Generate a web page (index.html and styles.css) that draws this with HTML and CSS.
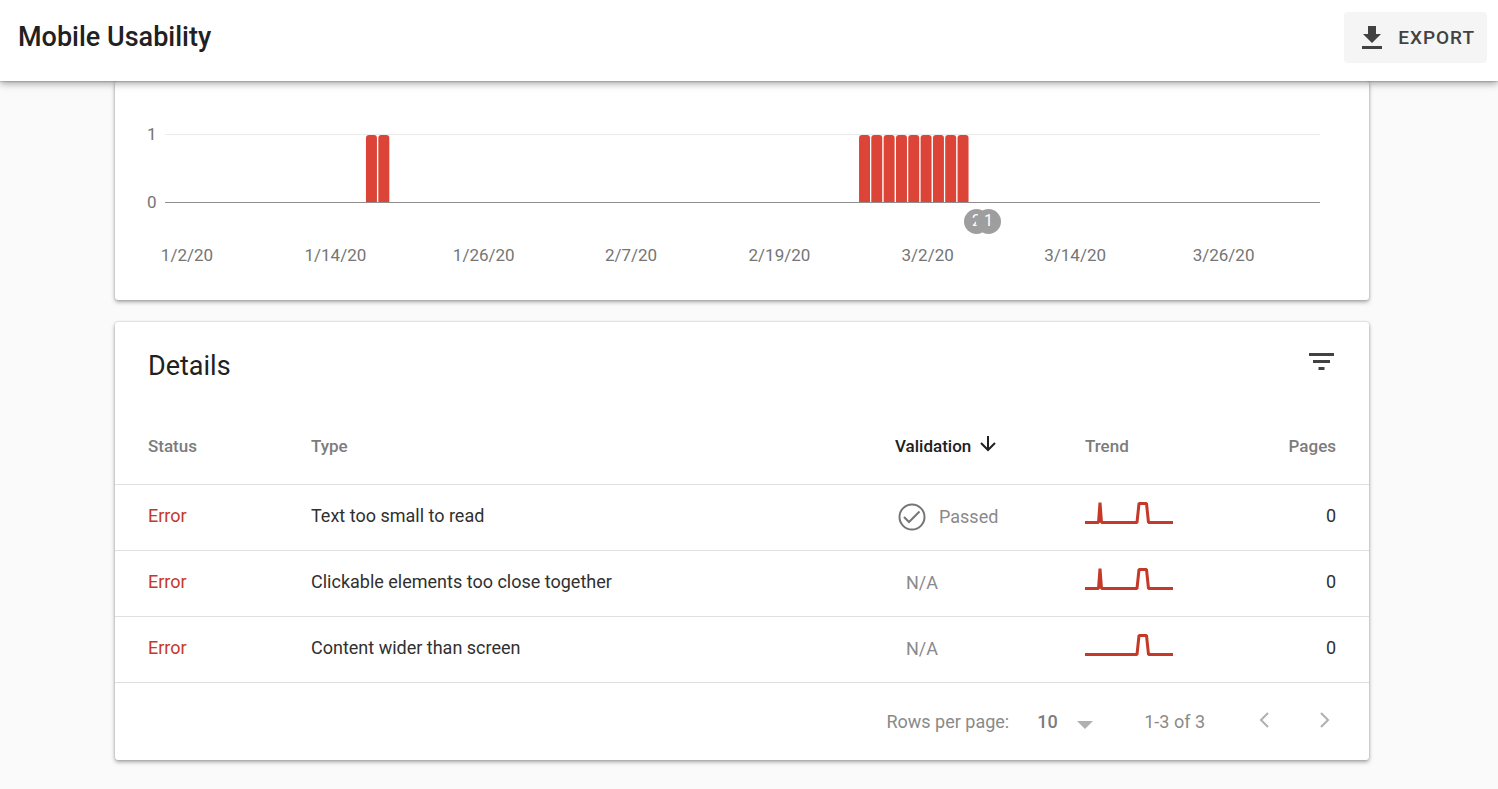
FILE: index.html
```html
<!DOCTYPE html>
<html lang="en">
<head>
<meta charset="utf-8">
<title>Mobile Usability</title>
<link rel="stylesheet" href="styles.css">
</head>
<body>
<header class="topbar">
  <h1 class="topbar-title">Mobile Usability</h1>
  <button class="export" type="button">
    <svg class="export-icon" width="28" height="28" viewBox="0 0 28 28" aria-hidden="true">
      <path d="M10 2h8v8h5l-9 9-9-9h5z"/><path d="M4 22h20v3H4z"/>
    </svg>
    <span>EXPORT</span>
  </button>
</header>

<main class="content">
  <section class="card chart-card" aria-label="Errors over time">
    <div class="y-axis"><span>1</span><span>0</span></div>
    <svg class="chart" width="100%" height="140">
      <rect class="grid-line" x="0" y="4" width="100%" height="1"/>
      <svg x="0" y="5" width="100%" height="68" class="bars">
        <rect x="17.4%" width="0.95%" height="80" rx="3"/>
        <rect x="18.47%" width="0.95%" height="80" rx="3"/>
        <rect x="60.09%" width="0.95%" height="80" rx="3"/>
        <rect x="61.15%" width="0.95%" height="80" rx="3"/>
        <rect x="62.22%" width="0.95%" height="80" rx="3"/>
        <rect x="63.29%" width="0.95%" height="80" rx="3"/>
        <rect x="64.35%" width="0.95%" height="80" rx="3"/>
        <rect x="65.42%" width="0.95%" height="80" rx="3"/>
        <rect x="66.49%" width="0.95%" height="80" rx="3"/>
        <rect x="67.55%" width="0.95%" height="80" rx="3"/>
        <rect x="68.62%" width="0.95%" height="80" rx="3"/>
      </svg>
      <rect class="axis-line" x="0" y="72" width="100%" height="1"/>
      <g class="markers">
        <circle cx="70.26%" cy="91.5" r="12.5"/><text x="70.26%" y="96">2</text>
        <circle cx="71.3%" cy="91.5" r="12.5"/><text x="71.3%" y="96">1</text>
      </g>
      <g class="x-labels">
        <text x="1.9%" y="131">1/2/20</text>
        <text x="14.75%" y="131">1/14/20</text>
        <text x="27.6%" y="131">1/26/20</text>
        <text x="40.35%" y="131">2/7/20</text>
        <text x="53.2%" y="131">2/19/20</text>
        <text x="66.03%" y="131">3/2/20</text>
        <text x="78.8%" y="131">3/14/20</text>
        <text x="91.65%" y="131">3/26/20</text>
      </g>
    </svg>
  </section>

  <section class="card">
    <div class="details-head">
      <h2 class="details-title">Details</h2>
      <button class="icon-button" type="button" aria-label="Filter">
        <svg width="26" height="18" viewBox="0 0 26 18" aria-hidden="true">
          <path d="M0 0h25v3H0zM4 7h17v3H4zM9.500 14h6v3h-6z"/>
        </svg>
      </button>
    </div>
    <table class="issues">
      <colgroup><col class="col-status"><col><col class="col-validation"><col class="col-trend"><col class="col-pages"></colgroup>
      <thead>
        <tr>
          <th scope="col">Status</th>
          <th scope="col">Type</th>
          <th scope="col" class="sorted" aria-sort="descending"><span class="sort">Validation
            <svg width="16" height="16" viewBox="0 0 16 16" aria-hidden="true"><path d="M8 0v14M1 7l7 7 7-7"/></svg></span></th>
          <th scope="col">Trend</th>
          <th scope="col" class="pages">Pages</th>
        </tr>
      </thead>
      <tbody>
        <tr>
          <td class="error">Error</td>
          <td>Text too small to read</td>
          <td class="validation"><span class="passed">
            <svg width="28" height="28" viewBox="0 0 28 28" aria-hidden="true"><circle cx="14" cy="14" r="12.5"/><path d="M6 14l5 5 10.500-10.500"/></svg>Passed</span></td>
          <td><svg class="trend" width="88" height="24" viewBox="0 0 88 24" aria-hidden="true"><path d="M0 21.500H13.500L15 1.500L16.500 21.500H52L54 2.500H61.500L63.500 21.500H88"/></svg></td>
          <td class="pages">0</td>
        </tr>
        <tr>
          <td class="error">Error</td>
          <td>Clickable elements too close together</td>
          <td class="validation na">N/A</td>
          <td><svg class="trend" width="88" height="24" viewBox="0 0 88 24" aria-hidden="true"><path d="M0 21.500H13.500L15 1.500L16.500 21.500H52L54 2.500H61.500L63.500 21.500H88"/></svg></td>
          <td class="pages">0</td>
        </tr>
        <tr>
          <td class="error">Error</td>
          <td>Content wider than screen</td>
          <td class="validation na">N/A</td>
          <td><svg class="trend" width="88" height="24" viewBox="0 0 88 24" aria-hidden="true"><path d="M0 21.500H52L54 2.500H61.500L63.500 21.500H88"/></svg></td>
          <td class="pages">0</td>
        </tr>
      </tbody>
    </table>
    <div class="pager">
      <label class="pager-label" for="rows">Rows per page:</label>
      <div class="pager-select">
        <select id="rows"><option>10</option><option>25</option><option>50</option></select>
        <svg width="16" height="8" viewBox="0 0 16 8" aria-hidden="true"><path d="M0 0h16L8 8z"/></svg>
      </div>
      <span class="pager-range">1-3 of 3</span>
      <button class="pager-button" type="button" aria-label="Previous page">
        <svg width="10" height="16" viewBox="0 0 10 16" aria-hidden="true"><path d="M9 1L2 8l7 7"/></svg>
      </button>
      <button class="pager-button" type="button" aria-label="Next page">
        <svg width="10" height="16" viewBox="0 0 10 16" aria-hidden="true"><path d="M1 1l7 7-7 7"/></svg>
      </button>
    </div>
  </section>
</main>
</body>
</html>
```
FILE: styles.css
```css
* { box-sizing: border-box; }

body {
  margin: 0;
  background: #fafafa;
  color: #303030;
  font: 400 18px/24px Roboto, sans-serif;
}

button {
  border: 0;
  background: none;
  padding: 0;
  color: inherit;
  font: inherit;
  cursor: pointer;
}

svg { display: block; }

.topbar {
  position: relative;
  z-index: 1;
  display: flex;
  justify-content: space-between;
  align-items: flex-start;
  padding: 12px 11px 18px 18px;
  background: #fff;
  box-shadow: 0 0 2px rgba(0, 0, 0, .4), 0 2px 8px rgba(0, 0, 0, .4);
}

.topbar-title {
  margin: 0;
  color: #212121;
  font-size: 27px;
  font-weight: 500;
  line-height: 51px;
}

.export {
  display: flex;
  align-items: center;
  gap: 12px;
  height: 51px;
  padding: 0 12px 0 14px;
  border-radius: 4px;
  background: #f5f5f5;
  color: #424242;
  font-size: 19px;
  font-weight: 500;
  letter-spacing: 1px;
}

.export-icon { fill: #424242; }

.content {
  display: flex;
  flex-direction: column;
  gap: 22px;
  padding: 0 129px 28px 115px;
}

.card {
  border-radius: 3px;
  background: #fff;
  box-shadow: 0 0 2px rgba(0, 0, 0, .2), 0 2px 4px rgba(0, 0, 0, .35);
}

.chart-card {
  display: flex;
  padding: 49px 49px 30px 32px;
}

.y-axis {
  display: flex;
  flex: none;
  flex-direction: column;
  gap: 44px;
  width: 18px;
  margin-top: -8px;
  color: #757575;
  font-size: 17px;
}

.chart {
  flex: 1;
  min-width: 0;
  overflow: visible;
  font-size: 17px;
}

.grid-line { fill: #ebebeb; }
.axis-line { fill: #8e8e8e; }
.bars { fill: #db4437; }
.markers circle { fill: #9e9e9e; }
.markers text { fill: #fff; font-size: 16px; text-anchor: middle; }
.x-labels text { fill: #757575; text-anchor: middle; }

.details-head {
  display: flex;
  justify-content: space-between;
  align-items: center;
  padding: 24px 34px 0 33px;
}

.details-title {
  margin: 0;
  color: #212121;
  font-size: 27px;
  font-weight: 400;
  line-height: 40px;
}

.icon-button { padding-bottom: 8px; }
.icon-button svg { fill: #424242; }

.issues {
  width: 100%;
  margin-top: 22px;
  border-collapse: collapse;
  table-layout: fixed;
}

.col-status { width: 196px; }
.col-validation { width: 190px; }
.col-trend, .col-pages { width: 142px; }

.issues th {
  height: 76px;
  padding: 0;
  color: #7c7c7c;
  font-size: 17px;
  font-weight: 500;
  text-align: left;
}

.issues td {
  height: 66px;
  padding: 0 0 2px;
  border-top: 1px solid #e0e0e0;
}

.issues th:first-child,
.issues td:first-child { padding-left: 33px; }

.issues .pages {
  padding-right: 33px;
  text-align: right;
}

.issues .sorted { color: #212121; }

.sort {
  display: flex;
  align-items: center;
  gap: 9px;
}

.sort svg {
  margin-bottom: 4px;
  fill: none;
  stroke: #212121;
  stroke-width: 2;
}

.issues .error { color: #c53929; }

.issues .validation {
  padding: 0;
  color: #8a8a8a;
}

.issues .na { padding-left: 11px; }

.passed {
  display: flex;
  align-items: center;
  gap: 13px;
  padding-left: 3px;
}

.passed svg {
  fill: none;
  stroke: #757575;
  stroke-width: 2;
}

.trend {
  margin-bottom: 6px;
  fill: none;
  stroke: #c53929;
  stroke-width: 3;
  stroke-linejoin: bevel;
}

.pager {
  display: flex;
  justify-content: flex-end;
  align-items: center;
  padding: 27px 39px 26px 0;
  border-top: 1px solid #e0e0e0;
  color: #8a8a8a;
}

.pager-select {
  display: flex;
  align-items: center;
  margin: 0 51px 0 28px;
}

.pager-select select {
  appearance: none;
  width: 56px;
  margin-right: -16px;
  padding: 0;
  border: 0;
  background: none;
  color: #7c7c7c;
  font: 500 18px/24px Roboto, sans-serif;
}

.pager-select svg {
  margin-top: 6px;
  pointer-events: none;
  fill: #b0b0b0;
}

.pager-range { margin-right: 54px; }

.pager-button {
  padding: 0 0 4px;
}

.pager-button + .pager-button { margin-left: 51px; }

.pager-button svg {
  fill: none;
  stroke: #b0b0b0;
  stroke-width: 2;
}
```
